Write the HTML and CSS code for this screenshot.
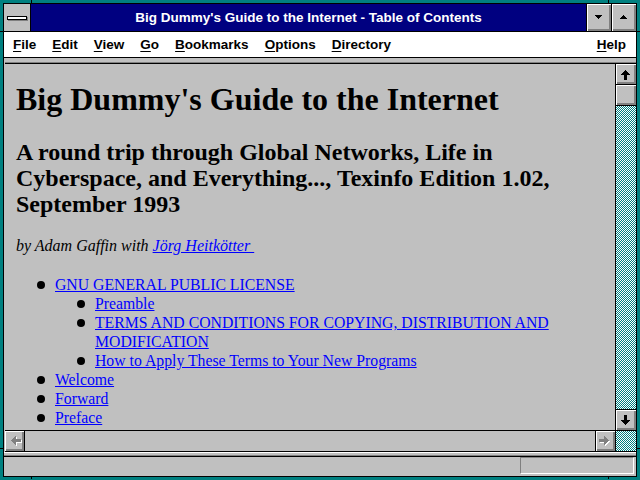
FILE: index.html
```html
<!DOCTYPE html>
<html>

<head>
    <meta charset="utf-8">
    <link rel="stylesheet" href="styles.css">
</head>

<body>

    <div class="window">
        <!-- sizing marks on the frame -->
        <span class="mark mark-v" style="left: 28px; top: -3px;"></span>
        <span class="mark mark-v" style="left: 605px; top: -3px;"></span>
        <span class="mark mark-v" style="left: 28px; top: 473px;"></span>
        <span class="mark mark-v" style="left: 605px; top: 473px;"></span>
        <span class="mark mark-h" style="left: -3px; top: 28px;"></span>
        <span class="mark mark-h" style="left: 634px; top: 28px;"></span>
        <span class="mark mark-h" style="left: -3px; top: 445px;"></span>
        <span class="mark mark-h" style="left: 634px; top: 445px;"></span>

        <div class="inner">
            <div class="titlebar">
                <div class="sysmenu"><span class="sysbar"></span></div>
                <div class="title">Big Dummy's Guide to the Internet - Table of Contents</div>
                <div class="tbtn">
                    <svg width="7" height="4" viewBox="0 0 7 4"><polygon points="0,0 7,0 3.5,4" /></svg>
                </div>
                <div class="tbtn">
                    <svg width="7" height="4" viewBox="0 0 7 4"><polygon points="3.5,0 7,4 0,4" /></svg>
                </div>
            </div>

            <div class="menubar">
                <span class="menu"><u>F</u>ile</span>
                <span class="menu"><u>E</u>dit</span>
                <span class="menu"><u>V</u>iew</span>
                <span class="menu"><u>G</u>o</span>
                <span class="menu"><u>B</u>ookmarks</span>
                <span class="menu"><u>O</u>ptions</span>
                <span class="menu"><u>D</u>irectory</span>
                <span class="menu help"><u>H</u>elp</span>
            </div>

            <div class="docframe">
                <div class="view">
                    <div class="docrow">
                        <div class="doc">
                            <h1>Big Dummy's Guide to the Internet</h1>
                            <h2>A round trip through Global Networks, Life in Cyberspace, and Everything..., Texinfo Edition 1.02, September 1993</h2>
                            <p class="byline">by Adam Gaffin with <a href="#">Jörg Heitkötter&nbsp;</a></p>
                            <ul>
                                <li><a href="#">GNU GENERAL PUBLIC LICENSE</a>
                                    <ul>
                                        <li><a href="#">Preamble</a></li>
                                        <li><a href="#">TERMS AND CONDITIONS FOR COPYING, DISTRIBUTION AND MODIFICATION</a></li>
                                        <li><a href="#">How to Apply These Terms to Your New Programs</a></li>
                                    </ul>
                                </li>
                                <li><a href="#">Welcome</a></li>
                                <li><a href="#">Forward</a></li>
                                <li><a href="#">Preface</a></li>
                            </ul>
                        </div>

                        <div class="vscroll">
                            <div class="sbtn up">
                                <svg width="20" height="20" viewBox="0 0 20 20"><path d="M9 6h1v1h1v1h1v1h1v1h1v1h-3v5h-3v-5h-3v-1h1v-1h1v-1h1v-1h1z" /></svg>
                            </div>
                            <div class="thumb"></div>
                            <div class="track"></div>
                            <div class="sbtn down">
                                <svg width="20" height="20" viewBox="0 0 20 20"><path transform="translate(0,21) scale(1,-1)" d="M9 6h1v1h1v1h1v1h1v1h1v1h-3v5h-3v-5h-3v-1h1v-1h1v-1h1v-1h1z" /></svg>
                            </div>
                        </div>
                    </div>

                    <div class="hrow">
                        <div class="hscroll">
                            <div class="sbtn left">
                                <svg width="19" height="20" viewBox="0 0 19 20">
                                    <path class="hi" transform="translate(1,1)" d="M6 9v1h1v1h1v1h1v1h1v1h1v-3h5v-3h-5v-3h-1v1h-1v1h-1v1h-1v1h-1z" />
                                    <path class="lo" d="M6 9v1h1v1h1v1h1v1h1v1h1v-3h5v-3h-5v-3h-1v1h-1v1h-1v1h-1v1h-1z" />
                                </svg>
                            </div>
                            <div class="htrack"></div>
                            <div class="sbtn right">
                                <svg width="19" height="20" viewBox="0 0 19 20">
                                    <g transform="translate(19,0) scale(-1,1)">
                                        <path class="hi" transform="translate(-1,1)" d="M6 9v1h1v1h1v1h1v1h1v1h1v-3h5v-3h-5v-3h-1v1h-1v1h-1v1h-1v1h-1z" />
                                        <path class="lo" d="M6 9v1h1v1h1v1h1v1h1v1h1v-3h5v-3h-5v-3h-1v1h-1v1h-1v1h-1v1h-1z" />
                                    </g>
                                </svg>
                            </div>
                        </div>
                        <div class="corner"></div>
                    </div>
                </div>
            </div>

            <div class="strip"></div>
            <div class="status">
                <div class="statusbox"></div>
            </div>
        </div>
    </div>

</body>

</html>
```

FILE: styles.css
```css
body {
    margin: 0;
    background-color: #008080;
}

.window {
    position: relative;
    width: 640px;
    height: 480px;
    box-sizing: border-box;
    border: 3px solid #008080;
}

/* little black ticks in the sizing border */
.mark {
    position: absolute;
    background-color: #000;
}

.mark-v {
    width: 1px;
    height: 3px;
}

.mark-h {
    width: 3px;
    height: 1px;
}

.inner {
    height: 100%;
    box-sizing: border-box;
    border: 1px solid #000;
    display: flex;
    flex-direction: column;
    background-color: #c0c0c0;
}

/* Title bar */
.titlebar {
    flex: none;
    display: flex;
    height: 27px;
    border-bottom: 1px solid #000;
    background-color: #000080;
}

.sysmenu {
    width: 26px;
    border-right: 1px solid #000;
    background-color: #c0c0c0;
    display: flex;
    align-items: center;
    justify-content: center;
}

.sysbar {
    width: 18px;
    height: 2px;
    background-color: #fff;
    border: 1px solid #000;
    box-shadow: 1px 1px 0 #808080;
}

.title {
    flex: 1;
    color: #fff;
    font-family: "Liberation Sans", Arial, sans-serif;
    font-weight: bold;
    font-size: 13.5px;
    line-height: 27px;
    text-align: center;
    white-space: nowrap;
}

.tbtn {
    width: 24px;
    border-left: 1px solid #000;
    background-color: #c0c0c0;
    box-shadow: inset 1px 1px #fff, inset -2px -2px #808080;
    display: flex;
    align-items: center;
    justify-content: center;
}

.tbtn svg {
    margin: -1px 1px 0 0;
    shape-rendering: crispEdges;
}

/* Menu bar */
.menubar {
    flex: none;
    display: flex;
    align-items: center;
    height: 25px;
    padding-left: 1px;
    background-color: #fff;
    border-bottom: 1px solid #000;
    font-family: "Liberation Sans", Arial, sans-serif;
    font-weight: bold;
    font-size: 13.5px;
}

.menu {
    padding: 0 8px;
}

.menu u {
    text-underline-offset: 2px;
}

.help {
    margin-left: auto;
    padding-right: 10px;
}

/* Document area */
.docframe {
    flex: 1;
    min-height: 0;
    display: flex;
    flex-direction: column;
    padding: 5px 0 0 1px;
}

.view {
    flex: 1;
    min-height: 0;
    display: flex;
    flex-direction: column;
    border-top: 1px solid #000;
    box-shadow: 0 -1px 0 #808080;
}

.docrow {
    flex: 1;
    min-height: 0;
    display: flex;
}

.doc {
    flex: 1;
    overflow: hidden;
    padding: 0 10px 0 11px;
    font-family: "Liberation Serif", "Times New Roman", serif;
    font-size: 16px;
    line-height: 19px;
    color: #000;
}

.doc h1 {
    margin: 17px 0 0;
    font-size: 32px;
    line-height: 36px;
}

.doc h2 {
    margin: 22px 0 0;
    font-size: 24px;
    line-height: 26px;
}

.byline {
    margin: 19px 0 0;
    font-style: italic;
}

.doc a {
    color: #0000ff;
}

.doc ul {
    margin: 20px 0 0;
    padding-left: 39px;
    list-style: none;
    font-size: 15.75px;
}

.doc ul ul {
    margin: 0;
    padding-left: 40px;
}

.doc li::before {
    content: "";
    display: inline-block;
    width: 8px;
    height: 8px;
    border-radius: 50%;
    background-color: #000;
    margin-left: -18px;
    margin-right: 10px;
    vertical-align: 1px;
}

/* Scroll bars */
.sbtn,
.thumb {
    background-color: #c0c0c0;
    box-shadow: inset 1px 1px #fff, inset -2px -2px #808080;
}

.sbtn svg {
    display: block;
    shape-rendering: crispEdges;
}

.vscroll {
    width: 20px;
    border-left: 1px solid #000;
    display: flex;
    flex-direction: column;
}

.vscroll .sbtn,
.thumb {
    height: 20px;
}

.up,
.thumb {
    border-bottom: 1px solid #000;
}

.down {
    border-top: 1px solid #000;
}

.track,
.corner {
    background: repeating-conic-gradient(#008080 0% 25%, #fff 0% 50%) 0 0 / 2px 2px;
}

.track {
    flex: 1;
}

.hrow {
    flex: none;
    display: flex;
    height: 20px;
    border-top: 1px solid #000;
    border-bottom: 1px solid #000;
}

.hscroll {
    flex: 1;
    display: flex;
}

.hscroll .sbtn {
    width: 19px;
}

.left {
    border-right: 1px solid #000;
}

.right {
    border-left: 1px solid #000;
}

.htrack {
    flex: 1;
}

.hi {
    fill: #fff;
}

.lo {
    fill: #808080;
}

.corner {
    width: 20px;
    border-left: 1px solid #000;
}

/* Status bar */
.strip {
    flex: none;
    height: 4px;
    box-sizing: border-box;
    border-top: 1px solid #fff;
    border-bottom: 1px solid #808080;
}

.status {
    flex: none;
    height: 19px;
    border-top: 1px solid #000;
    display: flex;
    justify-content: flex-end;
    padding-right: 2px;
}

.statusbox {
    width: 112px;
    height: 15px;
    border: 1px solid;
    border-color: #808080 #fff #fff #808080;
}
```
